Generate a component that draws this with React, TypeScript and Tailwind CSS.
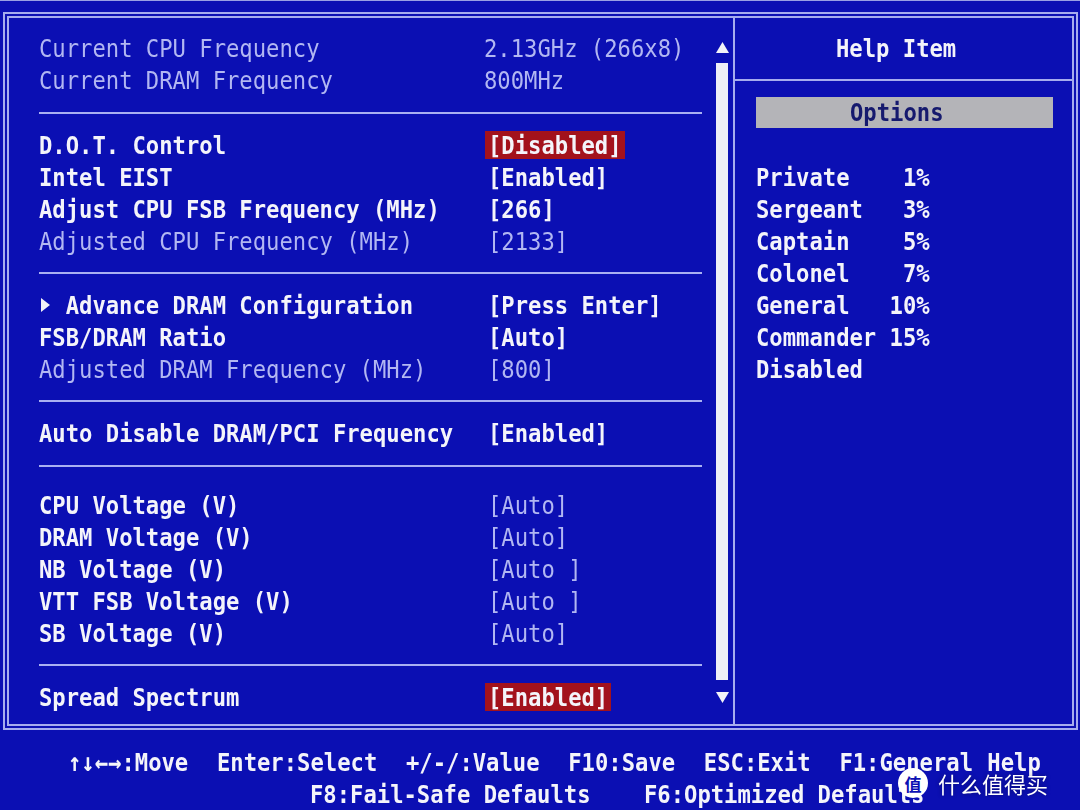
import React from 'react';

type Item =
  | {
      type: 'row';
      label: string;
      value: string;
      dim?: boolean;
      valueDim?: boolean;
      hl?: boolean;
      arrow?: boolean;
      shift?: boolean;
    }
  | { type: 'line'; cls: string };

const items: Item[] = [
  { type: 'row', label: 'Current CPU Frequency', value: '2.13GHz (266x8)', dim: true, valueDim: true, shift: true },
  { type: 'row', label: 'Current DRAM Frequency', value: '800MHz', dim: true, valueDim: true, shift: true },
  { type: 'line', cls: 'pt-[16px] pb-[15px]' },
  { type: 'row', label: 'D.O.T. Control', value: '[Disabled]', hl: true },
  { type: 'row', label: 'Intel EIST', value: '[Enabled]' },
  { type: 'row', label: 'Adjust CPU FSB Frequency (MHz)', value: '[266]' },
  { type: 'row', label: 'Adjusted CPU Frequency (MHz)', value: '[2133]', dim: true, valueDim: true },
  { type: 'line', cls: 'pt-[15px] pb-[15px]' },
  { type: 'row', label: 'Advance DRAM Configuration', value: '[Press Enter]', arrow: true },
  { type: 'row', label: 'FSB/DRAM Ratio', value: '[Auto]' },
  { type: 'row', label: 'Adjusted DRAM Frequency (MHz)', value: '[800]', dim: true, valueDim: true },
  { type: 'line', cls: 'pt-[15px] pb-[15px]' },
  { type: 'row', label: 'Auto Disable DRAM/PCI Frequency', value: '[Enabled]' },
  { type: 'line', cls: 'pt-[16px] pb-[22px]' },
  { type: 'row', label: 'CPU Voltage (V)', value: '[Auto]', valueDim: true },
  { type: 'row', label: 'DRAM Voltage (V)', value: '[Auto]', valueDim: true },
  { type: 'row', label: 'NB Voltage (V)', value: '[Auto ]', valueDim: true },
  { type: 'row', label: 'VTT FSB Voltage (V)', value: '[Auto ]', valueDim: true },
  { type: 'row', label: 'SB Voltage (V)', value: '[Auto]', valueDim: true },
  { type: 'line', cls: 'pt-[15px] pb-[15px]' },
  { type: 'row', label: 'Spread Spectrum', value: '[Enabled]', hl: true },
];

const ranks = [
  'Private    1%',
  'Sergeant   3%',
  'Captain    5%',
  'Colonel    7%',
  'General   10%',
  'Commander 15%',
  'Disabled',
];

// BIOS glyphs are taller than DejaVu's, stretch them a little
const T: React.FC<{ children: React.ReactNode; className?: string }> = ({ children, className }) => (
  <span className={`inline-block scale-y-[1.15] whitespace-pre ${className ?? ''}`}>{children}</span>
);

const Tri: React.FC<{ dir: 'up' | 'down' | 'right' }> = ({ dir }) => {
  if (dir === 'right') {
    return (
      <svg width="10" height="14" viewBox="0 0 10 14" className="block">
        <polygon points="1,0 10,7 1,14" fill="#f2f2f8" />
      </svg>
    );
  }
  return (
    <svg width="13" height="11" viewBox="0 0 13 11" className="block">
      {dir === 'up' ? (
        <polygon points="6.5,0 13,11 0,11" fill="#f2f2f8" />
      ) : (
        <polygon points="0,0 13,0 6.5,11" fill="#f2f2f8" />
      )}
    </svg>
  );
};

const SetupRow: React.FC<{ item: Extract<Item, { type: 'row' }> }> = ({ item }) => (
  <div className="flex h-[32px] items-center">
    <div className={`w-[449px] flex items-center ${item.dim ? 'text-[#b2b7f2] font-normal' : 'text-[#f4f4fa] font-bold'}`}>
      {item.arrow && (
        <span className="inline-flex w-[26.7px] items-center pl-[1px]">
          <Tri dir="right" />
        </span>
      )}
      <T>{item.label}</T>
    </div>
    {item.hl ? (
      <span className="-ml-[3px] inline-flex h-[28px] items-center bg-[#a3121c] px-[3px] font-bold text-[#f4f4fa]">
        <T>{item.value}</T>
      </span>
    ) : (
      <span
        className={`${item.shift ? '-ml-[4px]' : ''} ${
          item.valueDim ? 'text-[#b2b7f2] font-normal' : 'text-[#f4f4fa] font-bold'
        }`}
      >
        <T>{item.value}</T>
      </span>
    )}
  </div>
);

const App: React.FC = () => {
  return (
    <div
      className="relative flex h-[810px] w-[1080px] flex-col overflow-hidden border-t border-[#9aa0e4] bg-[#0b0fb3] text-[22.2px] leading-none"
      style={{ fontFamily: '"DejaVu Sans Mono", "Liberation Mono", monospace' }}
    >
      {/* main frame */}
      <div className="ml-[3px] mt-[11px] h-[718px] w-[1075px] border-2 border-[#a6acee] p-[2px]">
        <div className="flex h-full border-2 border-[#a6acee]">
          {/* setup items */}
          <div className="flex w-[724px] shrink-0">
            <div className="w-[693px] pl-[30px] pt-[14px]">
              {items.map((it, i) =>
                it.type === 'line' ? (
                  <div key={i} className={it.cls}>
                    <div className="h-[2px] bg-[#aab0f2]" />
                  </div>
                ) : (
                  <SetupRow key={i} item={it} />
                )
              )}
            </div>
            {/* scroll bar */}
            <div className="ml-[14px] flex w-[12px] flex-col items-center pt-[24px]">
              <Tri dir="up" />
              <div className="mt-[10px] h-[617px] w-[12px] bg-[#eeeef6]" />
              <div className="mt-[12px]">
                <Tri dir="down" />
              </div>
            </div>
          </div>
          <div className="w-[2px] shrink-0 bg-[#a6acee]" />
          {/* help panel */}
          <div className="flex-1">
            <div className="flex h-[61px] items-center pl-[101px] font-bold text-[#f4f4fa]">
              <T>Help Item</T>
            </div>
            <div className="h-[2px] bg-[#a6acee]" />
            <div className="px-[21px] pt-[16px]">
              <div className="flex h-[31px] w-[297px] items-center bg-[#b4b4b8] pl-[94px] font-bold text-[#161a6e]">
                <T>Options</T>
              </div>
              <div className="mt-[33px] font-bold text-[#f4f4fa]">
                {ranks.map((r) => (
                  <div key={r} className="flex h-[32px] items-center">
                    <T>{r}</T>
                  </div>
                ))}
              </div>
            </div>
          </div>
        </div>
      </div>

      {/* key legend */}
      <div className="flex flex-col pl-[68px] pt-[16px] font-bold text-[#f4f4fa]">
        <div className="flex h-[32px] items-center [word-spacing:1px]">
          <T>{'↑↓←→:Move  Enter:Select  +/-/:Value  F10:Save  ESC:Exit  F1:General Help'}</T>
        </div>
        <div className="flex h-[32px] items-center pl-[242px]">
          <T>{'F8:Fail-Safe Defaults    F6:Optimized Defaults'}</T>
        </div>
      </div>

      {/* watermark */}
      <div
        className="absolute left-[898px] top-[767px] flex items-center gap-[10px]"
        style={{ fontFamily: '"Noto Sans CJK SC", sans-serif' }}
      >
        <div className="flex h-[30px] w-[30px] items-center justify-center rounded-full bg-white text-[17px] font-bold text-[#0b0fb3]">
          值
        </div>
        <span className="text-[22px] leading-none text-white drop-shadow-[0_0_2px_rgba(0,0,0,0.4)]">什么值得买</span>
      </div>
    </div>
  );
};

export default App;
